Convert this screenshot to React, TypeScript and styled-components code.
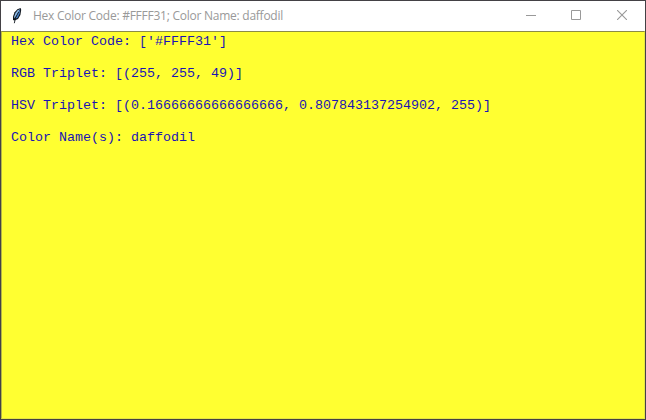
import React from "react";
import styled, { createGlobalStyle } from "styled-components";

const GlobalStyle = createGlobalStyle`
  * { box-sizing: border-box; }
  body { margin: 0; overflow: hidden; }
`;

const Window = styled.div`
  width: 646px;
  height: 420px;
  display: flex;
  flex-direction: column;
  background: #fff;
  border: 1px solid #434145;
`;

const TitleBar = styled.header`
  height: 30px;
  flex: none;
  display: flex;
  align-items: center;
  padding-left: 8px;
`;

const FeatherIcon = styled.svg`
  width: 16px;
  height: 16px;
  flex: none;
  margin-right: 8px;
`;

const Title = styled.h1`
  margin: 0;
  flex: 1;
  font: 400 12px/16px "Open Sans", "Noto Sans", sans-serif;
  letter-spacing: -0.25px;
  color: #999;
  white-space: pre;
`;

const Controls = styled.div`
  display: flex;
  height: 100%;
`;

const ControlButton = styled.button<{ $width: number }>`
  width: ${(p) => p.$width}px;
  height: 28px;
  padding: 0;
  border: 0;
  background: transparent;
  display: flex;
  align-items: center;
  justify-content: center;
  color: #999;

  svg {
    width: 10px;
    height: 10px;
    fill: none;
    stroke: currentColor;
  }
`;

const Swatch = styled.main`
  flex: 1;
  background: #ffff31;
  border: 1px solid #e6e640;
  border-top-color: #8b8b45;
  border-left-color: #b5b545;
  padding: 2px 9px;
`;

const Line = styled.p`
  margin: 0 0 16px;
  font: 400 13.333px/16px "Liberation Mono", "Courier New", monospace;
  color: #1a14b4;
  white-space: pre;
`;

const lines = [
  "Hex Color Code: ['#FFFF31']",
  "RGB Triplet: [(255, 255, 49)]",
  "HSV Triplet: [(0.16666666666666666, 0.807843137254902, 255)]",
  "Color Name(s): daffodil",
];

export default function App() {
  return (
    <>
      <GlobalStyle />
      <Window>
        <TitleBar>
          <FeatherIcon viewBox="0 0 16 16">
            <path d="M11.6 0 8.4 1.2 5.6 4.2 4 8.5 4 12 5.5 12.5 9 11 11.4 7 12.2 1.8Z" fill="#10161e" />
            <path d="M11 1 8.8 2.2 6.6 4.8 5.2 8.4 5.4 10.6 8 7Z" fill="#8ebbe8" />
            <path d="M11.2 1.4 10.7 5.6 8.8 9.4 6.2 11 8.2 6.6Z" fill="#4480c8" />
            <path d="M9.6 4 6.6 9.5 5.3 15.2" fill="none" stroke="#10161e" strokeWidth="0.9" />
          </FeatherIcon>
          <Title>Hex Color Code: #FFFF31; Color Name: daffodil</Title>
          <Controls>
            <ControlButton $width={44} aria-label="Minimize">
              <svg viewBox="0 0 10 10"><path d="M0 5.5H10" /></svg>
            </ControlButton>
            <ControlButton $width={46} aria-label="Maximize">
              <svg viewBox="0 0 10 10"><path d="M.5 .5H9.5V9.5H.5Z" /></svg>
            </ControlButton>
            <ControlButton $width={46} aria-label="Close">
              <svg viewBox="0 0 10 10"><path d="M0 0 10 10M10 0 0 10" strokeWidth="1.1" /></svg>
            </ControlButton>
          </Controls>
        </TitleBar>
        <Swatch>
          {lines.map((line) => (
            <Line key={line}>{line}</Line>
          ))}
        </Swatch>
      </Window>
    </>
  );
}
